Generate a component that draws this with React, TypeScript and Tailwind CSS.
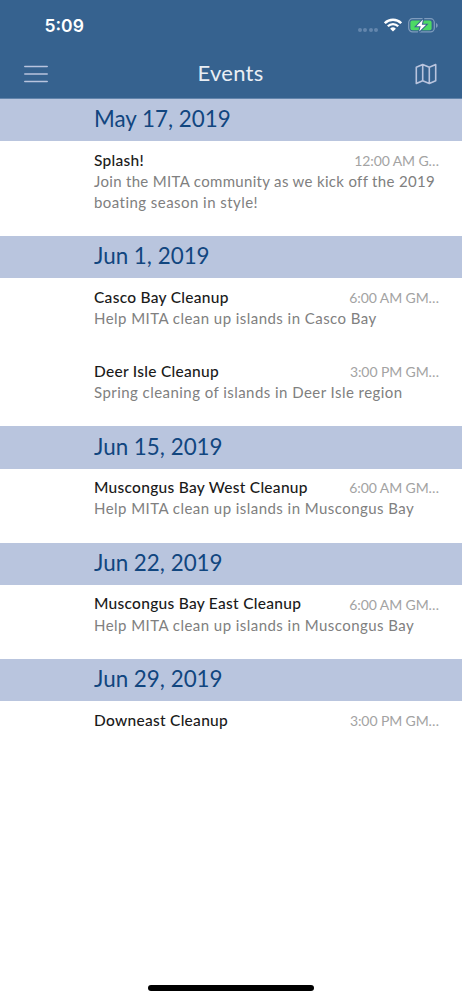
type EventItem = {
    title: string;
    time: string;
    lines: string[];
};

type Day = {
    date: string;
    events: EventItem[];
};

const days: Day[] = [
    {
        date: "May 17, 2019",
        events: [
            {
                title: "Splash!",
                time: "12:00 AM G…",
                lines: [
                    "Join the MITA community as we kick off the 2019",
                    "boating season in style!",
                ],
            },
        ],
    },
    {
        date: "Jun 1, 2019",
        events: [
            {
                title: "Casco Bay Cleanup",
                time: "6:00 AM GM…",
                lines: ["Help MITA clean up islands in Casco Bay"],
            },
            {
                title: "Deer Isle Cleanup",
                time: "3:00 PM GM…",
                lines: ["Spring cleaning of islands in Deer Isle region"],
            },
        ],
    },
    {
        date: "Jun 15, 2019",
        events: [
            {
                title: "Muscongus Bay West Cleanup",
                time: "6:00 AM GM…",
                lines: ["Help MITA clean up islands in Muscongus Bay"],
            },
        ],
    },
    {
        date: "Jun 22, 2019",
        events: [
            {
                title: "Muscongus Bay East Cleanup",
                time: "6:00 AM GM…",
                lines: ["Help MITA clean up islands in Muscongus Bay"],
            },
        ],
    },
    {
        date: "Jun 29, 2019",
        events: [
            {
                title: "Downeast Cleanup",
                time: "3:00 PM GM…",
                lines: [],
            },
        ],
    },
];

function StatusBar() {
    return (
        <div className="flex h-[50px] items-center pl-[44.5px] pr-[24px]">
            <span className="pt-[2px] font-['Inter'] text-[17.5px] font-semibold leading-none text-white">
                5:09
            </span>
            <div className="ml-auto flex items-center">
                <div className="mr-[6px] mt-[9px] flex gap-[1.5px]">
                    <span className="size-[4px] rounded-full bg-[#6486ad]" />
                    <span className="size-[4px] rounded-full bg-[#6486ad]" />
                    <span className="size-[4px] rounded-full bg-[#6486ad]" />
                    <span className="size-[4px] rounded-full bg-[#6486ad]" />
                </div>
                <svg width="18" height="14" viewBox="0 0 18 14" fill="none">
                    <path d="M.8 5.2a11.5 11.5 0 0 1 16.4 0" stroke="#fff" strokeWidth="2.5" />
                    <path d="M3.8 8.3a7.3 7.3 0 0 1 10.4 0" stroke="#fff" strokeWidth="2.3" />
                    <path d="M6.1 10.7a4.2 4.2 0 0 1 5.8 0L9 13.5z" fill="#fff" />
                </svg>
                <svg className="ml-[6px]" width="30" height="15" viewBox="0 0 30 15" fill="none">
                    <rect x=".7" y=".7" width="25.6" height="13.2" rx="3.8" stroke="#7f9cbd" strokeWidth="1.2" />
                    <rect x="2.4" y="2.4" width="21.2" height="9.8" rx="2" fill="#4cd964" />
                    <path d="M28 5v4.8c1.1-.4 1.7-1.3 1.7-2.4S29.1 5.4 28 5z" fill="#7f9cbd" />
                    <path
                        d="M15 1.5 8.4 8.2h4.3l-1.5 5.3 6.9-6.8h-4.3z"
                        fill="#fff"
                        stroke="#36628f"
                        strokeWidth="2"
                        paintOrder="stroke"
                    />
                </svg>
            </div>
        </div>
    );
}

function NavBar() {
    return (
        <div className="grid h-[48px] grid-cols-3 items-center pl-[24px] pr-[25px]">
            <svg width="24" height="18" viewBox="0 0 24 18" fill="none" stroke="#b9c4de" strokeWidth="1.5" strokeLinecap="round">
                <path d="M.8 1.5h22.4M.8 9h22.4M.8 16.5h22.4" />
            </svg>
            <h1 className="pb-[2px] text-center text-[22px] leading-none tracking-[0.3px] text-[#e9eef4]">
                Events
            </h1>
            <svg className="ml-auto" width="22" height="22" viewBox="0 0 22 22" fill="none" stroke="#b9c4de" strokeWidth="1.6" strokeLinejoin="round">
                <path d="M1.3 4.2 7.7 1.5l6.6 2.7L20.7 1.5v16.3l-6.4 2.7-6.6-2.7-6.4 2.7zM7.7 1.5v16.3M14.3 4.2v16.3" />
            </svg>
        </div>
    );
}

function EventRow({ event }: { event: EventItem }) {
    return (
        <li className="min-h-[74px] pb-[23.2px] pl-[94px] pr-[23px] pt-[8.8px]">
            <div className="flex h-[21px] items-center justify-between whitespace-nowrap">
                <h3 className="text-[15.5px] font-medium tracking-[0.28px] text-[#1a1a1a]">
                    {event.title}
                </h3>
                <span className="text-[14px] tracking-[-0.1px] text-[#a3a3a3]">
                    {event.time}
                </span>
            </div>
            {event.lines.map((line) => (
                <p
                    key={line}
                    className={`whitespace-nowrap text-[15px] leading-[21px] text-[#808080] ${
                        line.length > 46 ? "tracking-[0.32px]" : "tracking-[0.45px]"
                    }`}
                >
                    {line}
                </p>
            ))}
        </li>
    );
}

export default function App() {
    return (
        <div className="relative h-[1000px] w-[462px] overflow-hidden bg-white font-['Lato',sans-serif]">
            <header className="border-b border-[#6284ab] bg-[#36628f]">
                <StatusBar />
                <NavBar />
            </header>
            <main>
                {days.map((day) => (
                    <section key={day.date}>
                        <h2 className="flex h-[42.2px] items-center bg-[#b9c5de] pb-[2px] pl-[94px] text-[22.4px] text-[#11467f]">
                            {day.date}
                        </h2>
                        <ul>
                            {day.events.map((event) => (
                                <EventRow key={event.title} event={event} />
                            ))}
                        </ul>
                    </section>
                ))}
            </main>
            {/* home indicator */}
            <div className="absolute bottom-[9px] left-[148px] h-[6px] w-[166px] rounded-full bg-black" />
        </div>
    );
}
